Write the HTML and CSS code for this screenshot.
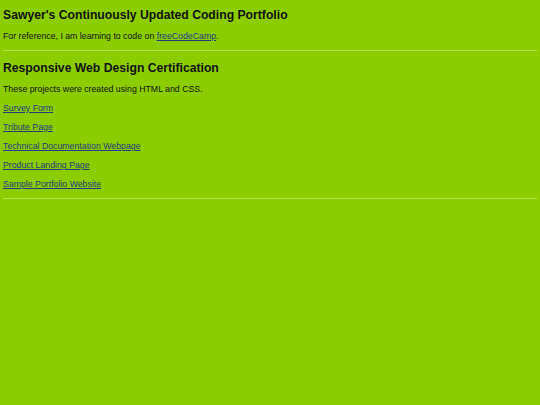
FILE: index.html
```html
<!DOCTYPE html>
<html>
<head>
<meta charset="utf-8">
<link rel="stylesheet" href="styles.css">
</head>
<body>
<h1 class="title">Sawyer's Continuously Updated Coding Portfolio</h1>
<p class="text">For reference, I am learning to code on <a href="#">freeCodeCamp</a>.</p>
<hr class="rule">
<h2 class="title">Responsive Web Design Certification</h2>
<p class="text">These projects were created using HTML and CSS.</p>
<p class="text"><a href="#">Survey Form</a></p>
<p class="text"><a href="#">Tribute Page</a></p>
<p class="text"><a href="#">Technical Documentation Webpage</a></p>
<p class="text"><a href="#">Product Landing Page</a></p>
<p class="text"><a href="#">Sample Portfolio Website</a></p>
<hr class="rule">
</body>
</html>
```
FILE: styles.css
```css
html, body {
  background: #8ccd00;
}
body {
  margin: 0;
  padding: 0 3px 0 3px;
  font-family: "Liberation Sans", Arial, sans-serif;
  color: #111;
}
.title {
  font-size: 12.2px;
  font-weight: bold;
  line-height: 15px;
  margin: 8px 0 0 0;
}
h2.title {
  margin-top: 10px;
}
.text {
  font-size: 8.75px;
  line-height: 11px;
  margin: 8px 0 0 0;
}
a {
  color: #253a80;
}
.rule {
  border: 0;
  height: 1px;
  background: #b6e05a;
  margin: 8px 0 0 0;
}
```
